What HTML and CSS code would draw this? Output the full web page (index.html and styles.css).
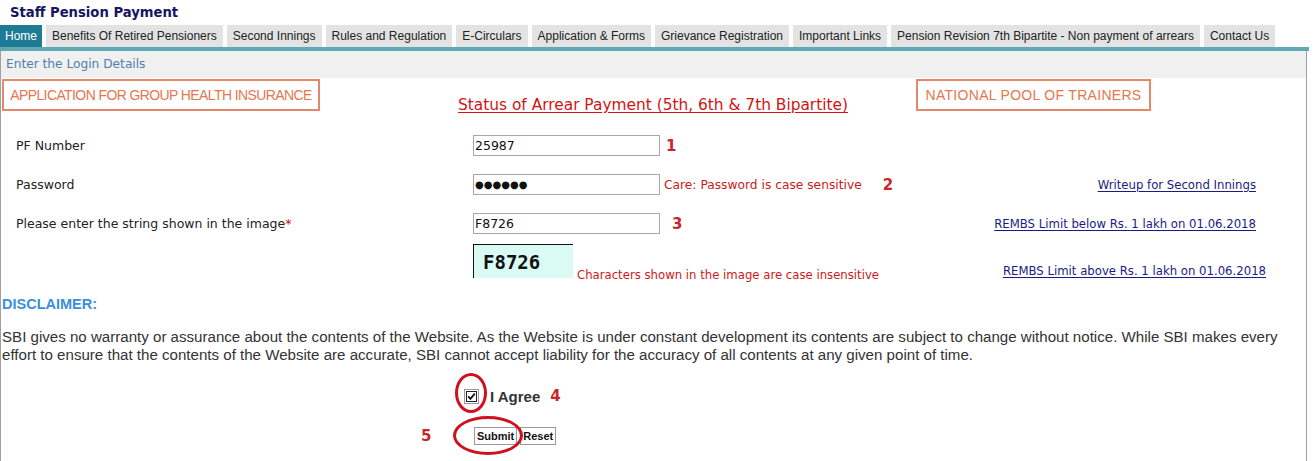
FILE: index.html
```html
<!DOCTYPE html>
<html>
<head>
<meta charset="utf-8">
<title>Staff Pension Payment</title>
<link rel="stylesheet" href="styles.css">
</head>
<body>
<div class="title">Staff Pension Payment</div>
<nav class="tabs">
  <a class="tab active">Home</a>
  <a class="tab">Benefits Of Retired Pensioners</a>
  <a class="tab">Second Innings</a>
  <a class="tab">Rules and Regulation</a>
  <a class="tab">E-Circulars</a>
  <a class="tab">Application &amp; Forms</a>
  <a class="tab">Grievance Registration</a>
  <a class="tab">Important Links</a>
  <a class="tab">Pension Revision 7th Bipartite - Non payment of arrears</a>
  <a class="tab">Contact Us</a>
</nav>
<div class="panel">
  <div class="panel-head">Enter the Login Details</div>
  <div class="top-row">
    <a class="box box-left">APPLICATION FOR GROUP HEALTH INSURANCE</a>
    <a class="status">Status of Arrear Payment (5th, 6th &amp; 7th Bipartite)</a>
    <a class="box box-right">NATIONAL POOL OF TRAINERS</a>
  </div>
  <div class="form-row first">
    <div class="label">PF Number</div>
    <input class="field" type="text" value="25987">
    <span class="num n1">1</span>
  </div>
  <div class="form-row">
    <div class="label">Password</div>
    <input class="field pw" type="text" value="●●●●●●">
    <span class="note">Care: Password is case sensitive</span>
    <span class="num n2">2</span>
    <a class="link link1">Writeup for Second Innings</a>
  </div>
  <div class="form-row">
    <div class="label">Please enter the string shown in the image<span class="star">*</span></div>
    <input class="field" type="text" value="F8726">
    <span class="num n3">3</span>
    <a class="link link1">REMBS Limit below Rs. 1 lakh on 01.06.2018</a>
  </div>
  <div class="captcha-row">
    <div class="captcha">F8726</div>
    <span class="note small">Characters shown in the image are case insensitive</span>
    <a class="link link2">REMBS Limit above Rs. 1 lakh on 01.06.2018</a>
  </div>
  <div class="disc-title">DISCLAIMER:</div>
  <p class="disc">SBI gives no warranty or assurance about the contents of the Website. As the Website is under constant development its contents are subject to change without notice. While SBI makes every effort to ensure that the contents of the Website are accurate, SBI cannot accept liability for the accuracy of all contents at any given point of time.</p>
  <div class="agree-row">
    <span class="ring ring1"></span>
    <span class="check"><svg width="15" height="15" viewBox="0 0 15 15"><rect x="0.5" y="0.5" width="14" height="14" fill="#fff" stroke="#333" stroke-dasharray="1 1"/><rect x="2.5" y="2.5" width="10" height="10" fill="#fff" stroke="#222"/><path d="M4.2 7.4 L6.4 9.8 L10.8 4.6" fill="none" stroke="#111" stroke-width="1.8"/></svg></span>
    <span class="agree">I Agree</span>
    <span class="num n4">4</span>
  </div>
  <div class="btn-row">
    <span class="num n5">5</span>
    <span class="ring ring2"></span>
    <button class="btn">Submit</button>
    <button class="btn">Reset</button>
  </div>
</div>
</body>
</html>
```
FILE: styles.css
```css
body {
  margin: 0;
  background: #fff;
  font-family: "DejaVu Sans", Verdana, sans-serif;
  font-size: 12px;
  color: #222;
}
.title {
  height: 25px;
  line-height: 25px;
  padding-left: 10px;
  font-weight: bold;
  font-size: 13.2px;
  color: #161660;
}
.tabs {
  display: flex;
  gap: 4px;
  width: 1309px;
  border-bottom: 4px solid #5fa8b4;
}
.tab {
  display: block;
  height: 22px;
  line-height: 23px;
  padding: 0 6px;
  background: #e3e3e3;
  font-family: "Liberation Sans", Arial, sans-serif;
  font-size: 12px;
  color: #222;
}
.tab.active {
  padding: 0 5px;
  background: #1f7a95;
  color: #fff;
}
.panel {
  width: 1305px;
  border-left: 1px solid #a0a0a0;
  border-right: 1px solid #a0a0a0;
  padding-bottom: 20px;
}
.panel-head {
  height: 27px;
  line-height: 27px;
  padding-left: 5px;
  background: #f0f0f0;
  color: #4b82ad;
  font-size: 12.2px;
}
.top-row {
  display: flex;
  align-items: flex-start;
  padding-left: 1px;
  margin-top: 1px;
  height: 32px;
}
.box {
  display: block;
  box-sizing: border-box;
  height: 32px;
  line-height: 28px;
  border: 2px solid #e4876a;
  font-family: "Liberation Sans", Arial, sans-serif;
  font-size: 14px;
  letter-spacing: -0.6px;
  color: #e5764f;
  text-align: center;
}
.box-left { width: 318px; }
.box-right {
  width: 235px;
  margin-left: auto;
  margin-right: 155px;
  letter-spacing: 0.3px;
}
.status {
  display: block;
  margin-left: 138px;
  padding-top: 17px;
  line-height: 18px;
  font-size: 15.4px;
  color: #d21414;
  text-decoration: underline;
  text-underline-offset: 2px;
}
.form-row {
  display: flex;
  align-items: center;
  height: 39px;
}
.form-row.first { margin-top: 15px; }
.label {
  width: 457px;
  padding-left: 15px;
  font-size: 12.5px;
  color: #222;
}
.star { color: #d01010; }
.field {
  box-sizing: border-box;
  width: 187px;
  height: 21px;
  margin: 0;
  padding: 0 0 0 1px;
  border: 1px solid #a8a8a8;
  font-family: "DejaVu Sans", Verdana, sans-serif;
  font-size: 12.5px;
  color: #111;
  background: #fff;
}
.field.pw { font-size: 10px; }
.num {
  font-weight: bold;
  font-size: 15px;
  color: #c8262c;
}
.n1 { margin-left: 6px; }
.n2 { margin-left: 21px; }
.n3 { margin-left: 12px; }
.note {
  margin-left: 4px;
  color: #cc1a1a;
  font-size: 12.25px;
}
.link {
  margin-left: auto;
  font-size: 11.7px;
  color: #1b1b85;
  text-decoration: underline;
  text-underline-offset: 2px;
}
.link1 { margin-right: 50px; }
.link2 { margin-right: 40px; }
.captcha-row {
  display: flex;
  align-items: flex-end;
  height: 34px;
  margin-top: 1px;
}
.captcha {
  box-sizing: border-box;
  width: 100px;
  height: 34px;
  margin-left: 472px;
  padding: 6px 0 0 9px;
  border-top: 1px solid #111;
  border-left: 1px solid #111;
  background: #d9fbf3;
  font-family: "DejaVu Sans Mono", monospace;
  font-weight: bold;
  font-size: 19px;
  line-height: 22px;
  color: #111;
}
.note.small {
  margin-left: 4px;
  font-size: 11.7px;
  line-height: 14px;
  margin-bottom: -4px;
}
.captcha-row .link { margin-bottom: 0; line-height: 14px; }
.disc-title {
  margin-top: 18px;
  padding-left: 1px;
  height: 16px;
  line-height: 16px;
  font-family: "Liberation Sans", Arial, sans-serif;
  font-weight: bold;
  font-size: 14.5px;
  color: #3b8fdb;
}
.disc {
  margin: 16px 0 0;
  padding: 0 8px 0 1px;
  font-family: "Liberation Sans", Arial, sans-serif;
  font-size: 15.1px;
  line-height: 18px;
  color: #333;
}
.agree-row {
  position: relative;
  display: flex;
  align-items: center;
  height: 24px;
  margin-top: 20px;
  padding-left: 463px;
}
.check { display: flex; width: 15px; height: 15px; }
.agree {
  margin-left: 11px;
  font-family: "Liberation Sans", Arial, sans-serif;
  font-weight: bold;
  font-size: 15px;
  color: #333;
}
.n4 { margin-left: 10px; }
.btn-row {
  position: relative;
  display: flex;
  align-items: center;
  height: 20px;
  margin-top: 18px;
  padding-left: 420px;
}
.n5 { width: 53px; }
.btn {
  box-sizing: border-box;
  height: 18px;
  margin: 0 3px 0 0;
  padding: 0 2px;
  border: 1px solid #9a9a9a;
  background: #fff;
  font-family: "Liberation Sans", Arial, sans-serif;
  font-weight: bold;
  font-size: 11px;
  color: #111;
}
.ring {
  position: absolute;
  border: 3px solid #d0101e;
  border-radius: 50%;
  box-sizing: border-box;
}
.ring1 { left: 454px; top: -11px; width: 32px; height: 40px; }
.ring2 { left: 452px; top: -10px; width: 70px; height: 39px; }
```
